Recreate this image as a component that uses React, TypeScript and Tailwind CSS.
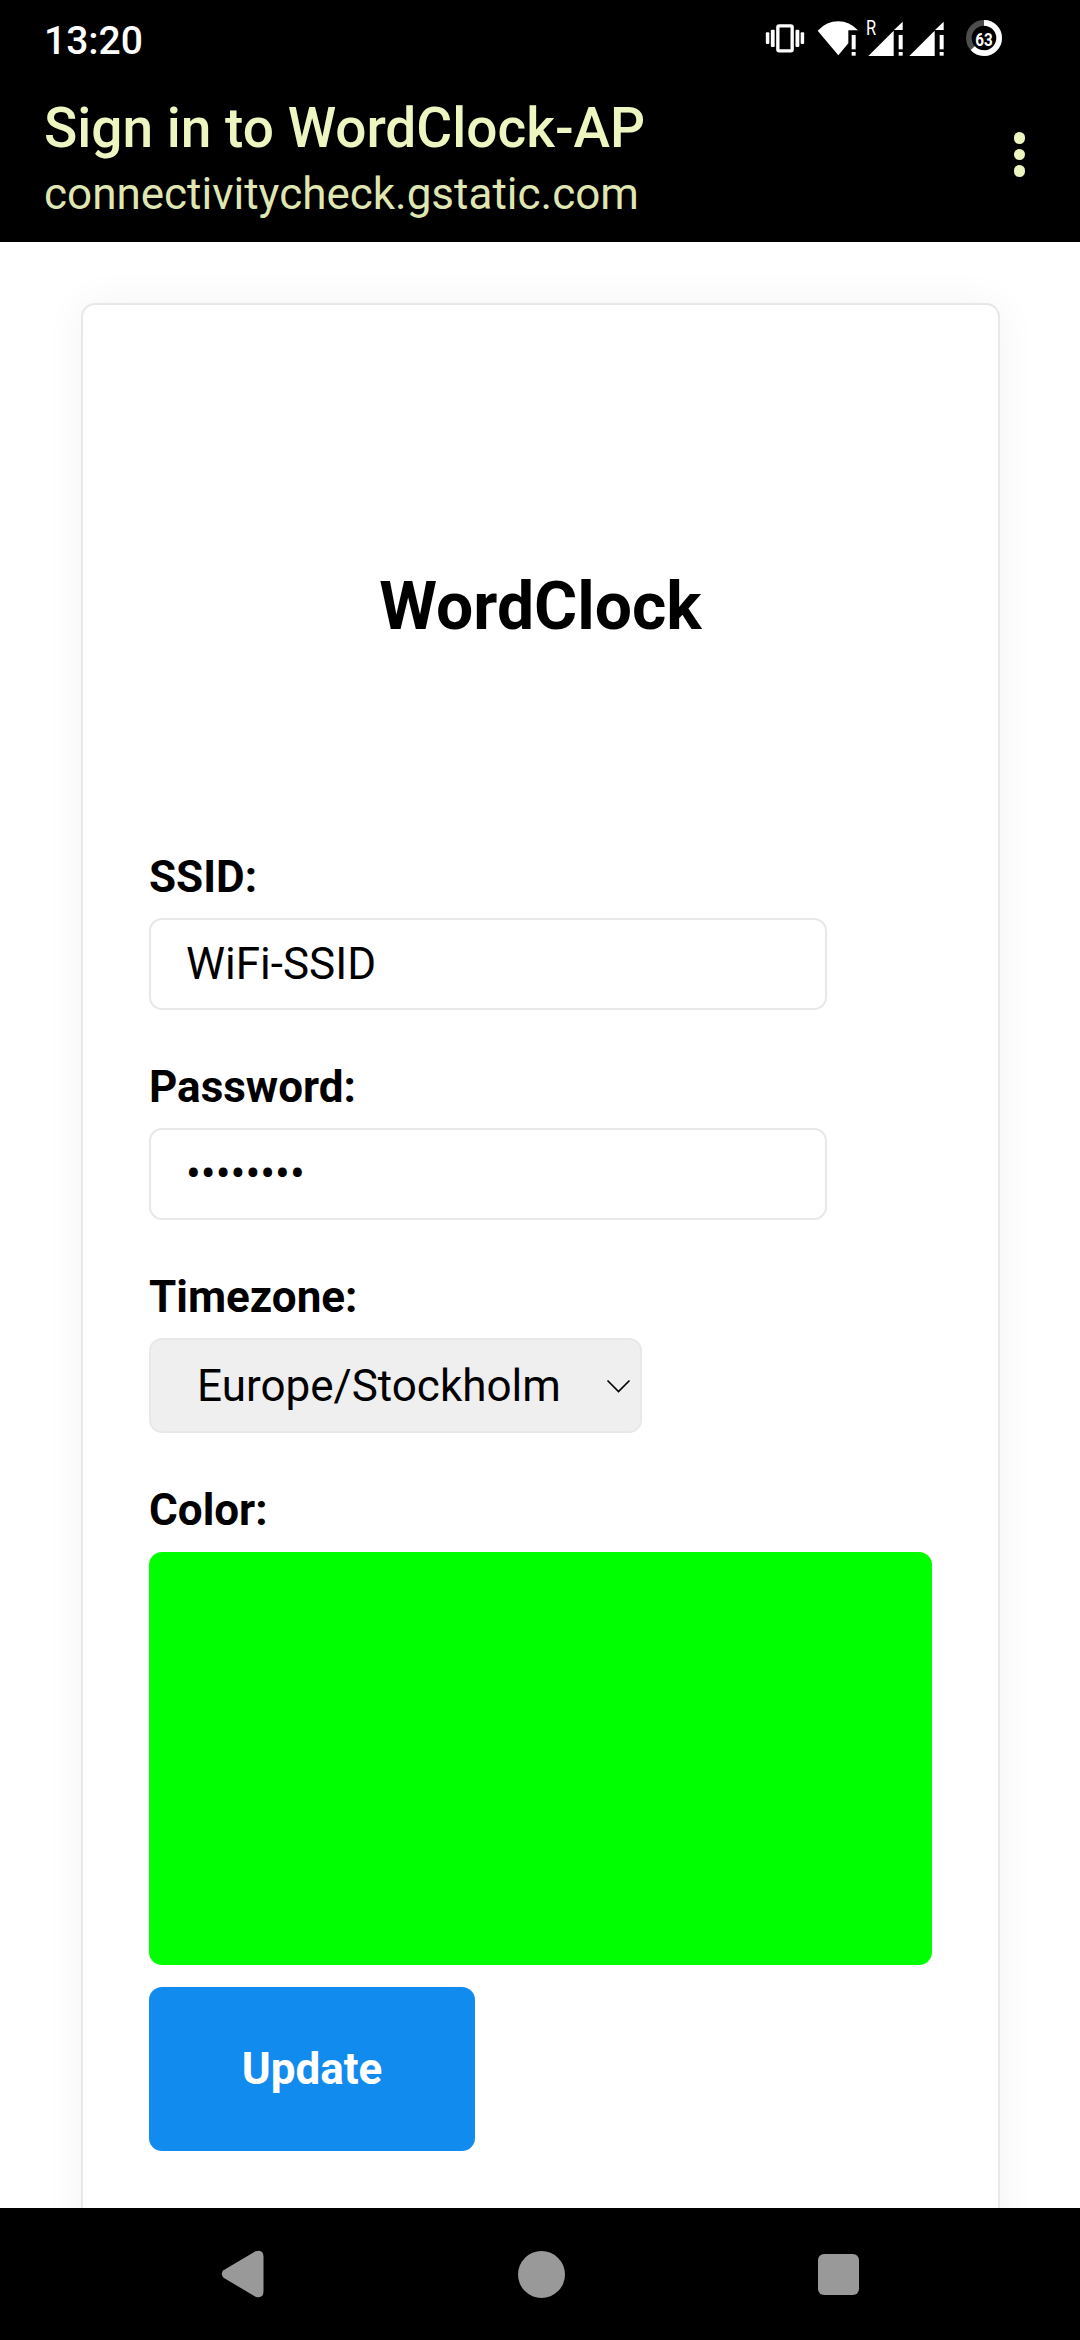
import type { ReactNode } from "react";

function VibrateIcon() {
  return (
    <svg className="h-[30px] w-[40px]" viewBox="72 70 120 90" fill="#fff">
      <rect x="74.500" y="98" width="10.500" height="35" rx="3" />
      <rect x="89.500" y="90" width="11.500" height="52" rx="3" />
      <rect x="110.500" y="78.500" width="43" height="75" rx="4" fill="none" stroke="#fff" strokeWidth="10" />
      <rect x="163.500" y="90" width="11.500" height="52" rx="3" />
      <rect x="179" y="98" width="10.500" height="35" rx="3" />
    </svg>
  );
}

function WifiAlertIcon() {
  return (
    <svg className="h-[36px] w-[42px]" viewBox="229 60 126 108" fill="#fff">
      <path d="M231 92Q258 64 293 64Q326 64 352 91H323V130L293 166Z" />
      <rect x="333" y="105" width="12" height="43" />
      <rect x="333" y="156" width="12" height="11" />
    </svg>
  );
}

function SignalAlertIcon() {
  return (
    <svg className="h-[36px] w-[37px]" viewBox="376 60 111 108" fill="#fff">
      <path d="M383 168L459 92V168Z" />
      <path d="M460 90L486 65V90Z" />
      <rect x="474" y="105" width="12" height="43" />
      <rect x="474" y="156" width="12" height="11" />
    </svg>
  );
}

function BatteryRing() {
  return (
    <div className="relative size-[36px]">
      <svg className="size-[36px]" viewBox="0 0 108 108">
        <circle cx="54" cy="54" r="45.500" fill="none" stroke="#4d4d4d" strokeWidth="17" />
        <circle
          cx="54"
          cy="54"
          r="45.500"
          fill="none"
          stroke="#fff"
          strokeWidth="17"
          pathLength="100"
          strokeDasharray="63 100"
          transform="rotate(-90 54 54)"
        />
      </svg>
      <span className="absolute inset-0 flex scale-x-[0.8] items-center justify-center pt-[2px] text-[19px] leading-none font-bold text-white">
        63
      </span>
    </div>
  );
}

function Header() {
  return (
    <header className="h-[242px] bg-black pl-[44px]">
      <div className="flex h-[80px] justify-between">
        <span className="pt-[18px] text-[39px] leading-[46px] font-medium text-white">13:20</span>
        <div className="flex pt-[20px] pr-[78px]">
          <div className="mr-[12px] pt-[3px]">
            <VibrateIcon />
          </div>
          <div className="mr-[7px]">
            <WifiAlertIcon />
          </div>
          <div className="relative mr-[4px]">
            <SignalAlertIcon />
            <span className="absolute -top-[4px] left-0 origin-left scale-x-[0.8] text-[20.500px] leading-[24px] text-white">R</span>
          </div>
          <div className="mr-[22px]">
            <SignalAlertIcon />
          </div>
          <BatteryRing />
        </div>
      </div>
      <div className="flex justify-between">
        <div className="flex flex-col whitespace-nowrap">
          <h1 className="pt-[16px] text-[55px] leading-[64px] font-medium text-[#edf5c0]">Sign in to WordClock-AP</h1>
          <p className="pt-[8px] text-[44px] leading-[52px] text-[#dfe6b2]">connectivitycheck.gstatic.com</p>
        </div>
        <button className="flex flex-col gap-[5px] pt-[52px] pr-[55px]" aria-label="More options">
          <span className="size-[11.500px] rounded-full bg-[#edf5c0]" />
          <span className="size-[11.500px] rounded-full bg-[#edf5c0]" />
          <span className="size-[11.500px] rounded-full bg-[#edf5c0]" />
        </button>
      </div>
    </header>
  );
}

function Field({ label, children }: { label: string; children: ReactNode }) {
  return (
    <div className="flex flex-col items-start">
      <label className="mb-[15px] pt-px text-[44px] leading-[52px] font-bold">{label}</label>
      {children}
    </div>
  );
}

function TextBox({ children }: { children: ReactNode }) {
  return (
    <div className="mb-[50px] h-[92px] w-[678px] rounded-[13px] border-2 border-[#e8e8e8] pt-[18px] pl-[35px] text-[44px] leading-[52px]">
      {children}
    </div>
  );
}

export default function App() {
  return (
    <div className="flex h-[2340px] w-[1080px] flex-col overflow-hidden bg-white font-[Roboto,sans-serif] text-black">
      <Header />
      <main className="h-[1966px] overflow-hidden pt-[61px] pl-[81px]">
        <section className="h-[2100px] w-[919px] rounded-[14px] border-2 border-[#e8e8e8] bg-white px-[66px] shadow-[0_0_40px_rgba(0,0,0,0.05)]">
          <h2 className="pt-[262px] pb-[203px] text-center text-[66px] leading-[80px] font-bold">WordClock</h2>
          <Field label="SSID:">
            <TextBox>WiFi-SSID</TextBox>
          </Field>
          <Field label="Password:">
            <TextBox>••••••••</TextBox>
          </Field>
          <Field label="Timezone:">
            <div className="mb-[50px] flex h-[95px] w-[493px] items-start justify-between rounded-[13px] border-2 border-[#e8e8e8] bg-[#efefef] pt-[20px] pr-[9px] pl-[46px] text-[44px] leading-[52px]">
              <span>Europe/Stockholm</span>
              <svg className="mt-[19px] h-[14px] w-[25px]" viewBox="0 0 25 14" fill="none" stroke="#000" strokeWidth="1.700">
                <path d="M1.500 1.500L12.500 12.500L23.500 1.500" />
              </svg>
            </div>
          </Field>
          <Field label="Color:">
            <div className="mt-px h-[413px] w-[783px] rounded-[13px] bg-[#00ff00]" />
          </Field>
          <button className="mt-[22px] block h-[164px] w-[326px] rounded-[13px] bg-[#128bef] text-[44px] leading-[52px] font-bold text-white">
            Update
          </button>
        </section>
      </main>
      <nav className="flex h-[132px] items-center justify-between bg-black pr-[221px] pl-[221px]">
        <svg className="h-[48px] w-[43px]" viewBox="0 0 43 48" fill="#999">
          <path d="M2.500 20.300L34.500 1.300Q42.500-1 42.500 7V41Q42.500 49 34.500 46.700L2.500 27.700Q-1 24 2.500 20.300Z" />
        </svg>
        <span className="size-[47px] rounded-full bg-[#999]" />
        <span className="size-[41px] rounded-[6px] bg-[#999]" />
      </nav>
    </div>
  );
}
